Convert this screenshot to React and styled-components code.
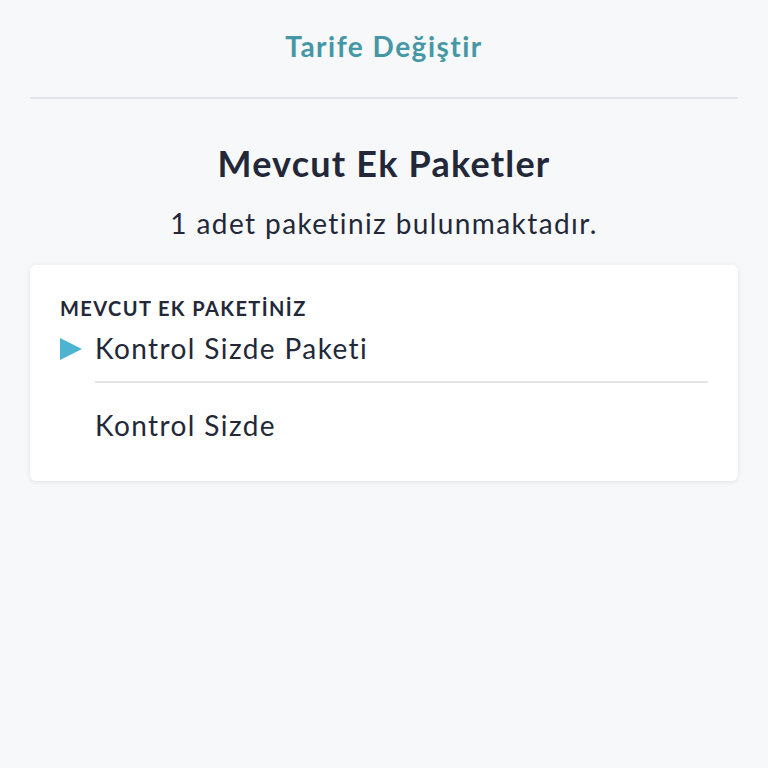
import React from 'react';
import styled, { createGlobalStyle } from 'styled-components';

const Global = createGlobalStyle`
  html, body {
    margin: 0;
    padding: 0;
    background: #f7f8fa;
  }
  body {
    font-family: Lato, "Noto Sans", sans-serif;
    color: #232838;
  }
`;

const Page = styled.div`
  min-height: 768px;
  padding: 0 30px;
  box-sizing: border-box;
`;

const TopBar = styled.div`
  height: 99px;
  display: flex;
  align-items: center;
  justify-content: center;
  padding-bottom: 6px;
  box-sizing: border-box;
  border-bottom: 2px solid #e1e4ea;
`;

const TopLink = styled.div`
  font-size: 28px;
  font-weight: 700;
  letter-spacing: 1.5px;
  color: #4597a5;
`;

const Header = styled.div`
  display: flex;
  flex-direction: column;
  align-items: center;
  padding-top: 42px;
`;

const Title = styled.h1`
  margin: 0;
  font-size: 36px;
  font-weight: 700;
  letter-spacing: 1.2px;
  line-height: 44px;
`;

const Subtitle = styled.p`
  margin: 21px 0 0;
  font-size: 28px;
  letter-spacing: 1.4px;
  line-height: 34px;
`;

const Card = styled.div`
  margin-top: 25px;
  background: #fff;
  border-radius: 6px;
  box-shadow: 0 1px 4px rgba(30, 40, 60, 0.1);
  padding: 31px 30px 10px;
`;

const Label = styled.div`
  font-size: 20px;
  font-weight: 700;
  line-height: 24px;
  letter-spacing: 1.4px;
`;

const Item = styled.div`
  position: relative;
  padding-left: 35px;
`;

const ItemText = styled.div`
  display: flex;
  align-items: center;
  height: ${p => p.$h}px;
  padding-bottom: ${p => p.$pb || 0}px;
  box-sizing: border-box;
  font-size: 28px;
  letter-spacing: 1.4px;
  border-bottom: ${p => (p.$line ? '2px solid #e3e5ea' : 'none')};
`;

const Marker = styled.svg`
  position: absolute;
  left: 0;
  top: 18px;
`;

export default function App() {
  return (
    <>
      <Global />
      <Page>
        <TopBar>
          <TopLink>Tarife Değiştir</TopLink>
        </TopBar>
        <Header>
          <Title>Mevcut Ek Paketler</Title>
          <Subtitle>1 adet paketiniz bulunmaktadır.</Subtitle>
        </Header>
        <Card>
          <Label>MEVCUT EK PAKETİNİZ</Label>
          <Item>
            <Marker width="22" height="22" viewBox="0 0 22 22">
              <polygon points="0,0 22,11 0,22" fill="#4cb4d0" />
            </Marker>
            <ItemText $h={63} $pb={6} $line>Kontrol Sizde Paketi</ItemText>
          </Item>
          <Item>
            <ItemText $h={88} $pb={4}>Kontrol Sizde</ItemText>
          </Item>
        </Card>
      </Page>
    </>
  );
}
